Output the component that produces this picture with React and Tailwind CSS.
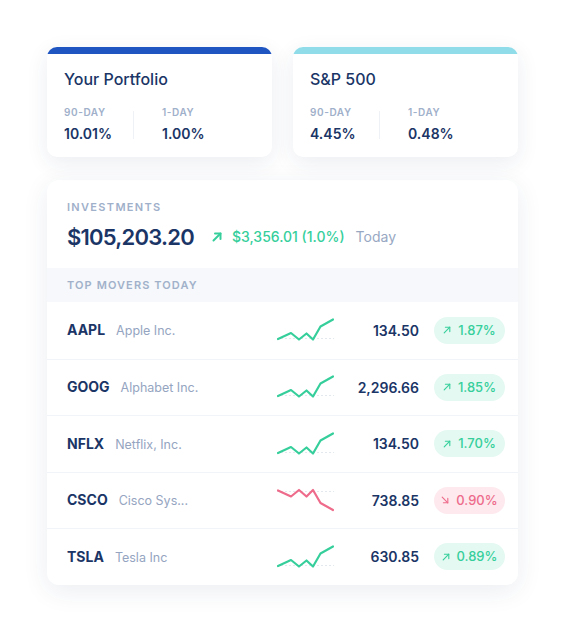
import React from "react";

const movers = [
  { ticker: "AAPL", name: "Apple Inc.", price: "134.50", change: "1.87%", up: true },
  { ticker: "GOOG", name: "Alphabet Inc.", price: "2,296.66", change: "1.85%", up: true },
  { ticker: "NFLX", name: "Netflix, Inc.", price: "134.50", change: "1.70%", up: true },
  { ticker: "CSCO", name: "Cisco Sys...", price: "738.85", change: "0.90%", up: false },
  { ticker: "TSLA", name: "Tesla Inc", price: "630.85", change: "0.89%", up: true },
];

function Spark({ up }) {
  if (up) {
    return (
      <svg width="57" height="24" viewBox="0 0 57 24" fill="none">
        <line x1="0" y1="20.5" x2="57" y2="20.5" stroke="#e3e8ef" strokeWidth="1" strokeDasharray="2 2" />
        <polyline
          points="1,21 14,15 22,21.5 29.5,15.5 36,21.5 43.5,8.5 56,1.5"
          stroke="#36cf9c"
          strokeWidth="2.2"
          strokeLinejoin="round"
          strokeLinecap="round"
        />
      </svg>
    );
  }
  return (
    <svg width="57" height="24" viewBox="0 0 57 24" fill="none">
      <line x1="0" y1="3.5" x2="57" y2="3.5" stroke="#e3e8ef" strokeWidth="1" strokeDasharray="2 2" />
      <polyline
        points="1,2.5 14,8.5 22,2 29.5,8.5 36,2 43.5,15 56,22"
        stroke="#ee6b8b"
        strokeWidth="2.2"
        strokeLinejoin="round"
        strokeLinecap="round"
      />
    </svg>
  );
}

function Arrow({ up, size = 9, color, width = 1.6 }) {
  return (
    <svg width={size} height={size} viewBox="0 0 10 10" fill="none">
      {up ? (
        <>
          <line x1="1.5" y1="8.5" x2="8.5" y2="1.5" stroke={color} strokeWidth={width} strokeLinecap="round" />
          <polyline points="3,1.5 8.5,1.5 8.5,7" stroke={color} strokeWidth={width} strokeLinecap="round" strokeLinejoin="round" />
        </>
      ) : (
        <>
          <line x1="1.5" y1="1.5" x2="8.5" y2="8.5" stroke={color} strokeWidth={width} strokeLinecap="round" />
          <polyline points="3,8.5 8.5,8.5 8.5,3" stroke={color} strokeWidth={width} strokeLinecap="round" strokeLinejoin="round" />
        </>
      )}
    </svg>
  );
}

function StatCard({ title, bar, ninety, oneDay }) {
  return (
    <div className="w-[225px] rounded-[10px] bg-white overflow-hidden shadow-[0_6px_22px_rgba(28,52,100,0.09)]">
      <div className={`h-[7px] ${bar}`}></div>
      <div className="pl-[17px] pt-[15px] pb-[14px]">
        <div className="text-[16px] leading-[20px] font-medium text-[#1a3566]">{title}</div>
        <div className="mt-[17px] flex items-center">
          <div className="w-[69px]">
            <div className="text-[10px] leading-[12px] font-semibold tracking-[0.06em] text-[#9fb0ca]">90-DAY</div>
            <div className="mt-[7px] text-[14px] leading-[18px] font-semibold text-[#1a3566]">{ninety}</div>
          </div>
          <div className="w-px h-[28px] bg-[#eef1f5]"></div>
          <div className="ml-[28px]">
            <div className="text-[10px] leading-[12px] font-semibold tracking-[0.06em] text-[#9fb0ca]">1-DAY</div>
            <div className="mt-[7px] text-[14px] leading-[18px] font-semibold text-[#1a3566]">{oneDay}</div>
          </div>
        </div>
      </div>
    </div>
  );
}

export default function App() {
  return (
    <div className="w-[565px] h-[632px] bg-white pt-[47px] px-[47px]" style={{ fontFamily: "Inter, 'Noto Sans', sans-serif" }}>
      <div className="flex gap-[21px]">
        <StatCard title="Your Portfolio" bar="bg-[#1f55c1]" ninety="10.01%" oneDay="1.00%" />
        <StatCard title="S&P 500" bar="bg-[#90dde9]" ninety="4.45%" oneDay="0.48%" />
      </div>

      <div className="mt-[23px] w-[471px] rounded-[12px] bg-white overflow-hidden shadow-[0_6px_26px_rgba(28,52,100,0.09)]">
        <div className="px-[20px] pt-[20px] pb-[17px]">
          <div className="text-[11px] leading-[14px] font-semibold tracking-[0.12em] text-[#9fb0ca]">INVESTMENTS</div>
          <div className="mt-[9px] flex items-center">
            <div className="text-[22px] leading-[28px] font-semibold tracking-[-0.035em] text-[#1a3566]">$105,203.20</div>
            <div className="ml-[18px] flex items-center">
              <Arrow up size={10} color="#36cf9c" width={2} />
            </div>
            <div className="ml-[10px] text-[14px] leading-[18px] font-medium text-[#36cf9c]">$3,356.01 (1.0%)</div>
            <div className="ml-[11px] text-[14px] leading-[18px] text-[#98a8c3]">Today</div>
          </div>
        </div>

        <div className="h-[34px] bg-[#f6f8fb] px-[20px] flex items-center">
          <div className="text-[11px] leading-[14px] font-semibold tracking-[0.1em] text-[#a1b1ca]">TOP MOVERS TODAY</div>
        </div>

        <div>
          {movers.map((m, i) => (
            <div
              key={m.ticker}
              className={`h-[56.5px] pl-[20px] pr-[13px] grid grid-cols-[210px_57px_85px_71px] items-center ${i > 0 ? "border-t border-[#f1f4f8]" : ""}`}
            >
              <div className="flex items-baseline">
                <span className="text-[14px] font-bold text-[#1a3566]">{m.ticker}</span>
                <span className="ml-[11px] text-[12.5px] text-[#95a5c1]">{m.name}</span>
              </div>
              <div className="flex items-center">
                <Spark up={m.up} />
              </div>
              <div className="text-right text-[14px] font-semibold text-[#1a3566] pr-[15px] -mr-[15px]">{m.price}</div>
              <div
                className={`ml-[15px] -mr-[15px] w-[71px] h-[27px] rounded-full flex items-center justify-center gap-[7px] ${
                  m.up ? "bg-[#e4f9f1] text-[#36cf9c]" : "bg-[#fde9ee] text-[#ee6b8b]"
                }`}
              >
                <Arrow up={m.up} size={8} color={m.up ? "#36cf9c" : "#ee6b8b"} width={1.4} />
                <span className="text-[13px] font-medium">{m.change}</span>
              </div>
            </div>
          ))}
        </div>
      </div>
    </div>
  );
}
